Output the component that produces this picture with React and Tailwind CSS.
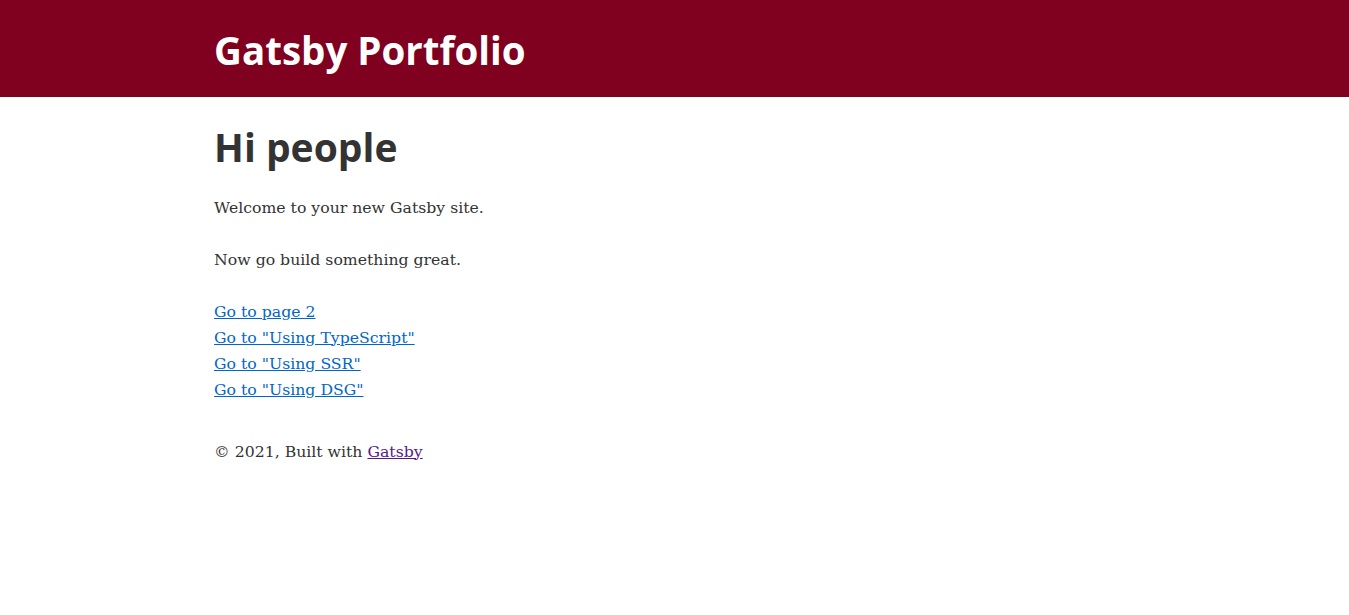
import React from 'react';

const links = [
  'Go to page 2',
  'Go to "Using TypeScript"',
  'Go to "Using SSR"',
  'Go to "Using DSG"',
];

export default function App() {
  return (
    <div className="min-h-[615px] bg-white text-[#333] font-['DejaVu_Serif',serif] text-[15.7px] leading-[26px]">
      <header className="flex h-[97px] items-center bg-[#800020]">
        <div className="mx-auto w-full max-w-[960px] px-[19.575px] pt-[2px]">
          <h1 className="font-['Open_Sans',sans-serif] text-[38.5px] font-bold leading-[44px] text-white">
            <a href="#">Gatsby Portfolio</a>
          </h1>
        </div>
      </header>

      <div className="mx-auto max-w-[960px] px-[19.575px] pt-[28px]">
        <main>
          <h1 className="mb-[25px] font-['Open_Sans',sans-serif] text-[39px] font-bold leading-[44.5px]">
            Hi people
          </h1>
          <p className="mb-[26px]">Welcome to your new Gatsby site.</p>
          <p className="mb-[26px]">Now go build something great.</p>
          <p>
            {links.map((label, i) => (
              <React.Fragment key={label}>
                <a href="#" className="text-[#0066cc] underline">
                  {label}
                </a>
                {i < links.length - 1 && <br />}
              </React.Fragment>
            ))}
          </p>
        </main>
        <footer className="mt-[36px]">
          © 2021, Built with{' '}
          <a href="#" className="text-[#551a8b] underline">
            Gatsby
          </a>
        </footer>
      </div>
    </div>
  );
}
